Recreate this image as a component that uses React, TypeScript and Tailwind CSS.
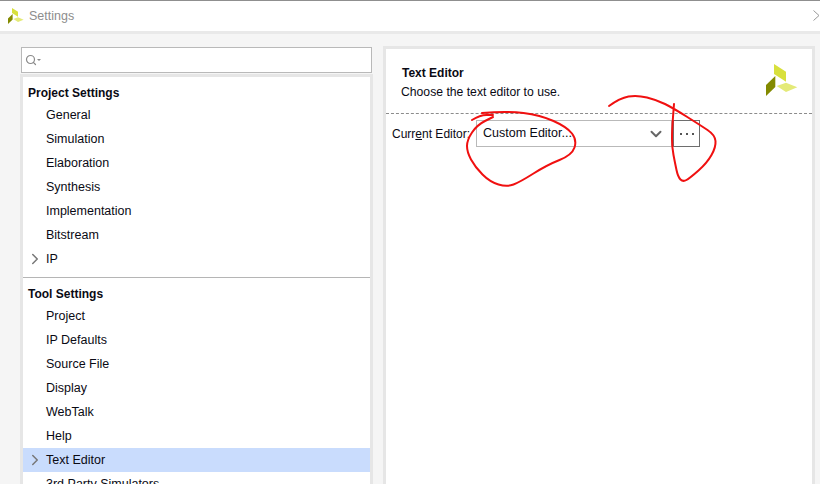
import React from 'react';
import { ChevronRight, ChevronDown, Search } from 'lucide-react';

const Logo = ({ className }: { className: string }) => (
  <svg className={className} viewBox="0 0 32 32">
    <polygon points="8,0 20,7.7 20,17.7 8,10" fill="#d8e03c" />
    <polygon points="0,21 9.3,12 9.3,23 0,32" fill="#838a00" />
    <polygon points="10.7,22 20,18.7 31.3,23.3 20,28" fill="#e4ea78" />
  </svg>
);

const Item = ({ label, arrow, selected }: { label: string; arrow?: boolean; selected?: boolean }) => (
  <div className={`h-6 flex items-center shrink-0 text-[12.5px] ${selected ? 'bg-[#c9dcfd]' : ''}`}>
    <div className="w-[23px] shrink-0">
      {arrow && <ChevronRight className="w-[18px] h-[18px] text-[#777] ml-[3px]" strokeWidth={2} />}
    </div>
    <span>{label}</span>
  </div>
);

const Heading = ({ label }: { label: string }) => (
  <div className="h-[21px] flex items-center pl-[5px] font-bold shrink-0">{label}</div>
);

// smooth pen stroke through a list of points
const penPath = (pts: number[][]) => {
  let d = `M${pts[0][0]} ${pts[0][1]}`;
  for (let i = 1; i < pts.length - 1; i++) {
    const mx = (pts[i][0] + pts[i + 1][0]) / 2;
    const my = (pts[i][1] + pts[i + 1][1]) / 2;
    d += ` Q${pts[i][0]} ${pts[i][1]} ${mx} ${my}`;
  }
  const last = pts[pts.length - 1];
  return `${d} L${last[0]} ${last[1]}`;
};

const leftLoop = [[482, 113], [507, 111], [540, 115], [567, 127], [577, 140], [572, 155], [547, 165], [520, 182], [507, 187], [490, 182], [475, 167], [467, 152], [467, 140], [477, 125], [493, 117]];
const leftTick = [[472, 120], [480, 115], [493, 115]];
const rightLoop = [[609, 106], [620, 98], [637, 95], [657, 100], [673, 108], [700, 125], [715, 135], [716, 147], [707, 163], [690, 178], [683, 182], [678, 177], [675, 163], [672, 147], [672, 130], [674, 104]];

export default function App() {
  return (
    <div className="relative w-[820px] h-[484px] overflow-hidden bg-[#f5f5f5] text-[12px] text-[#0a0a14] font-['Liberation_Sans',Arial,sans-serif]">
      {/* title bar */}
      <div className="h-[34px] bg-white border-t border-t-[#8f8f8f] border-b-[3px] border-b-[#e9e9e9] flex items-center justify-between">
        <div className="flex items-center pl-2">
          <Logo className="w-4 h-4" />
          <span className="ml-[5px] text-[#8d8d8d] text-[12.5px]">Settings</span>
        </div>
        <svg className="w-[7px] h-[11px] mb-px" viewBox="0 0 7 11" fill="none" stroke="#999" strokeWidth="1">
          <polyline points="0.5,0.5 6,5.5 0.5,10.5" />
        </svg>
      </div>

      <div className="flex pl-5 pt-3 h-[450px]">
        {/* left column */}
        <div className="w-[353px] shrink-0 flex flex-col">
          <div className="h-[26px] mt-px mb-px mx-px bg-white border border-[#b9b9b9] flex items-center pl-[3px] shrink-0">
            <Search className="w-3 h-3 text-[#8a8a8a]" strokeWidth={2.4} />
            <span className="w-0 h-0 border-x-2 border-t-2 border-x-transparent border-t-[#8a8a8a]" />
          </div>
          <div className="flex-1 bg-white border-[3px] border-[#e6e6e6] border-b-0 overflow-hidden flex flex-col pt-[5px]">
            <Heading label="Project Settings" />
            <Item label="General" />
            <Item label="Simulation" />
            <Item label="Elaboration" />
            <Item label="Synthesis" />
            <Item label="Implementation" />
            <Item label="Bitstream" />
            <Item label="IP" arrow />
            <div className="h-px bg-[#b5b5b5] mt-[6px] mb-[5px] shrink-0" />
            <Heading label="Tool Settings" />
            <Item label="Project" />
            <Item label="IP Defaults" />
            <Item label="Source File" />
            <Item label="Display" />
            <Item label="WebTalk" />
            <Item label="Help" />
            <Item label="Text Editor" arrow selected />
            <Item label="3rd Party Simulators" />
          </div>
        </div>

        {/* right panel */}
        <div className="ml-[10px] w-[432px] shrink-0 bg-white border-[3px] border-[#e6e6e6] border-b-0">
          <div className="h-[65px] relative border-b border-dashed border-[#8c8c8c] pt-[15px] pl-[15px]">
            <div className="font-bold pl-px h-[17px] flex items-center">Text Editor</div>
            <div className="h-[22px] flex items-center text-[12.2px]">Choose the text editor to use.</div>
            <Logo className="absolute right-[14px] top-[15px] w-8 h-8" />
          </div>
          <div className="flex items-center pl-[6px] mt-[6px]">
            <span className="w-[84px] shrink-0 whitespace-nowrap">
              Curr<span className="underline">e</span>nt Editor:
            </span>
            <div className="w-[196px] h-[27px] border border-[#b9b9b9] flex items-center justify-between pl-[6px] pr-[6px] text-[12.5px]">
              <span>Custom Editor...</span>
              <ChevronDown className="w-[18px] h-[18px] text-[#666]" strokeWidth={2.6} />
            </div>
            <div className="ml-px w-[27px] h-[27px] border border-[#6e6e6e] flex items-center justify-center gap-[4px]">
              <span className="w-[2px] h-[2px] bg-[#555]" />
              <span className="w-[2px] h-[2px] bg-[#555]" />
              <span className="w-[2px] h-[2px] bg-[#555]" />
            </div>
          </div>
        </div>
      </div>

      {/* red pen marks drawn over the window */}
      <svg className="absolute left-0 top-0 pointer-events-none" width="820" height="484" fill="none" stroke="#f01010" strokeWidth="2" strokeLinecap="round" strokeLinejoin="round">
        <path d={penPath(leftLoop)} />
        <path d={penPath(leftTick)} />
        <path d={penPath(rightLoop)} />
      </svg>
    </div>
  );
}
